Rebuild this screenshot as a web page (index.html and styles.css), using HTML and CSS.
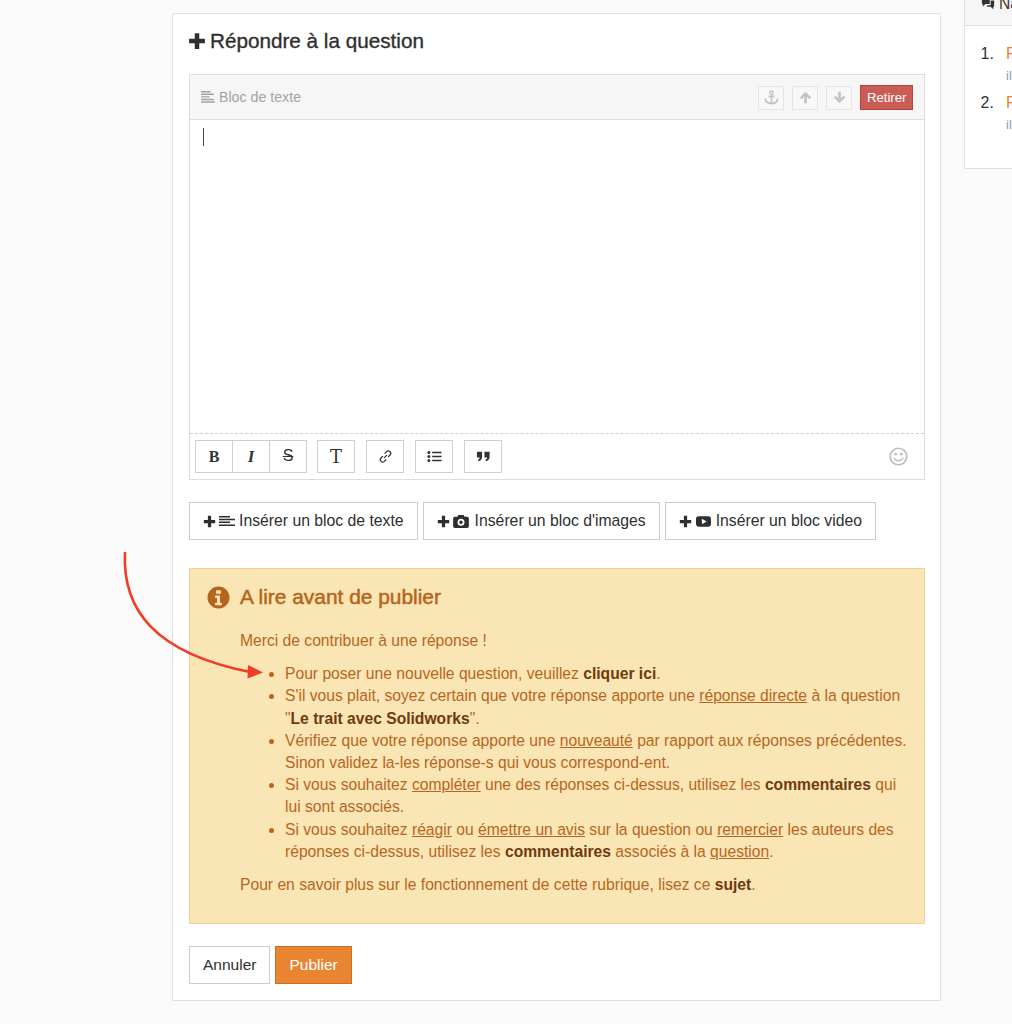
FILE: index.html
```html
<!DOCTYPE html>
<html lang="fr">
<head>
<meta charset="utf-8">
<title>Répondre à la question</title>
<link rel="stylesheet" href="styles.css">
</head>
<body>
<svg width="0" height="0" class="defs">
  <symbol id="i-plus" viewBox="0 0 16 16"><path d="M6 1h4v5h5v4h-5v5H6v-5H1V6h5z"/></symbol>
  <symbol id="i-lines" viewBox="0 0 16 14"><path d="M0 0h11v1.700H0zM0 3h15v1.700H0zM0 6h10v1.700H0zM0 9h15v1.700H0zM0 12h16v1.700H0z"/></symbol>
  <symbol id="i-lines4" viewBox="0 0 16 10"><path d="M0 0h11v1.500H0zM0 2.800h16v1.500H0zM0 5.600h11v1.500H0zM0 8.500h16V10H0z"/></symbol>
  <symbol id="i-camera" viewBox="0 0 18 16"><path fill-rule="evenodd" d="M6 1h6l1.200 2H16a2 2 0 0 1 2 2v9a2 2 0 0 1-2 2H2a2 2 0 0 1-2-2V5a2 2 0 0 1 2-2h2.800zM9 5.500a4 4 0 1 0 0 8 4 4 0 0 0 0-8zM9 7.500a2 2 0 1 1 0 4 2 2 0 0 1 0-4z"/></symbol>
  <symbol id="i-video" viewBox="0 0 16 11"><path fill-rule="evenodd" d="M3 0h10a3 3 0 0 1 3 3v5a3 3 0 0 1-3 3H3a3 3 0 0 1-3-3V3a3 3 0 0 1 3-3zM6.300 2.500v6l5-3z"/></symbol>
</svg>

<div class="page">
  <main class="card">
    <h2 class="card-title"><svg class="ico-title"><use href="#i-plus"/></svg>Répondre à la question</h2>

    <section class="editor">
      <header class="editor-head">
        <span class="block-label"><svg class="ico-label"><use href="#i-lines"/></svg>Bloc de texte</span>
        <div class="head-actions">
          <span class="mini-btn"><svg viewBox="0 0 16 16" class="ico-anchor"><path d="M8 4.500V14.500M4.800 6.800h6.400M1.300 9c.3 3.500 3 5.500 6.700 5.500s6.400-2 6.700-5.500" fill="none" stroke="currentColor" stroke-width="1.800"/><circle cx="8" cy="2.800" r="1.800" fill="none" stroke="currentColor" stroke-width="1.500"/></svg></span>
          <span class="mini-btn"><svg viewBox="0 0 16 16" class="ico-mini"><path d="M8 1l7 7-2.200 2.200-3.100-3.100V15H6.300V7.100L3.200 10.200 1 8z" fill="currentColor"/></svg></span>
          <span class="mini-btn"><svg viewBox="0 0 16 16" class="ico-mini"><path d="M8 15L1 8l2.200-2.200 3.100 3.100V1h3.400v7.900l3.100-3.100L15 8z" fill="currentColor"/></svg></span>
          <span class="remove-btn">Retirer</span>
        </div>
      </header>
      <div class="editor-body"><span class="caret"></span></div>
      <footer class="editor-tools">
        <div class="tool-group">
          <span class="tool"><b class="t-bold">B</b></span>
          <span class="tool"><i class="t-italic">I</i></span>
          <span class="tool"><s class="t-strike">S</s></span>
        </div>
        <span class="tool tool-solo"><span class="t-serif">T</span></span>
        <span class="tool tool-solo"><svg viewBox="0 0 16 16" class="ico-tool"><path d="M6.800 9.200l2.400-2.400M7.500 4.500l1.700-1.700a2.500 2.500 0 0 1 3.600 3.600l-1.700 1.700M8.500 11.500l-1.700 1.700a2.500 2.500 0 0 1-3.600-3.600l1.700-1.700" fill="none" stroke="currentColor" stroke-width="1.300" stroke-linecap="round"/></svg></span>
        <span class="tool tool-solo"><svg viewBox="0 0 16 16" class="ico-tool"><path d="M5.500 3h10v1.600h-10zM5.500 7.200h10v1.600h-10zM5.500 11.400h10V13h-10z" fill="currentColor"/><circle cx="2" cy="3.800" r="1.600"/><circle cx="2" cy="8" r="1.600"/><circle cx="2" cy="12.200" r="1.600"/></svg></span>
        <span class="tool tool-solo"><svg viewBox="0 0 16 16" class="ico-tool"><path d="M1 3h5.500v5.500c0 2.500-1.500 4-3.800 4.500L2 11.500c1.200-.3 1.800-1 1.900-2.500H1zM9 3h5.500v5.500c0 2.500-1.500 4-3.800 4.500L10 11.500c1.200-.3 1.800-1 1.900-2.500H9z" fill="currentColor"/></svg></span>
        <svg viewBox="0 0 20 20" class="ico-smile"><circle cx="10" cy="10" r="8.700" fill="none" stroke="currentColor" stroke-width="1.800"/><circle cx="7" cy="7.500" r="1.500" fill="currentColor"/><circle cx="13" cy="7.500" r="1.500" fill="currentColor"/><path d="M5.500 12c1 1.700 2.600 2.500 4.500 2.500s3.500-.8 4.500-2.500" fill="none" stroke="currentColor" stroke-width="1.600" stroke-linecap="round"/></svg>
      </footer>
    </section>

    <div class="insert-row">
      <span class="btn btn-insert"><svg class="ico-plus"><use href="#i-plus"/></svg><svg class="ico-lines"><use href="#i-lines4"/></svg>Insérer un bloc de texte</span>
      <span class="btn btn-insert"><svg class="ico-plus"><use href="#i-plus"/></svg><svg class="ico-cam"><use href="#i-camera"/></svg>Insérer un bloc d'images</span>
      <span class="btn btn-insert"><svg class="ico-plus"><use href="#i-plus"/></svg><svg class="ico-vid"><use href="#i-video"/></svg>Insérer un bloc video</span>
    </div>

    <section class="notice">
      <h3 class="notice-title"><svg viewBox="0 0 24 24" class="ico-info"><path fill-rule="evenodd" d="M12 .5a11.500 11.500 0 1 1 0 23 11.500 11.500 0 0 1 0-23zM9.500 4.500v3.500h5V4.500zM8.500 10v2.500h2v5h-2V20h7v-2.500h-2V10z"/></svg>A lire avant de publier</h3>
      <div class="notice-body">
        <p class="intro">Merci de contribuer à une réponse !</p>
        <ul class="rules">
          <li>Pour poser une nouvelle question, veuillez <a class="strong-link">cliquer ici</a>.</li>
          <li>S'il vous plait, soyez certain que votre réponse apporte une <u>réponse directe</u> à la question "<a class="strong-link">Le trait avec Solidworks</a>".</li>
          <li>Vérifiez que votre réponse apporte une <u>nouveauté</u> par rapport aux réponses précédentes. Sinon validez la-les réponse-s qui vous correspond-ent.</li>
          <li>Si vous souhaitez <u>compléter</u> une des réponses ci-dessus, utilisez les <a class="strong-link">commentaires</a> qui lui sont associés.</li>
          <li>Si vous souhaitez <u>réagir</u> ou <u>émettre un avis</u> sur la question ou <u>remercier</u> les auteurs des réponses ci-dessus, utilisez les <a class="strong-link">commentaires</a> associés à la <u>question</u>.</li>
        </ul>
        <p class="outro">Pour en savoir plus sur le fonctionnement de cette rubrique, lisez ce <a class="strong-link">sujet</a>.</p>
      </div>
    </section>

    <div class="form-actions">
      <span class="btn">Annuler</span>
      <span class="btn btn-primary">Publier</span>
    </div>
  </main>

  <aside class="side">
    <div class="side-head"><svg viewBox="0 0 16 16" class="ico-side"><path d="M1 1h9v7H5l-3 3V8H1zM11 4h4v7h-1v3l-3-3H7V9.500h4z"/></svg>Navigation</div>
    <ol class="side-list">
      <li><a>Réponse</a><small>il y a</small></li>
      <li><a>Réponse</a><small>il y a</small></li>
    </ol>
  </aside>
</div>

<svg class="arrow" viewBox="0 0 160 140" width="160" height="140">
  <path d="M5 2C2 60 35 103 130 122" fill="none" stroke="#ee3e27" stroke-width="2.600"/>
  <path d="M143 122.500L128 115l-.5 13.500z" fill="#ee3e27"/>
</svg>
</body>
</html>
```
FILE: styles.css
```css
* { box-sizing: border-box; }
html, body { margin: 0; height: 100%; }
body {
  background: #fafafa;
  color: #333;
  font: 15.65px/22.2px "Liberation Sans", Arial, sans-serif;
  overflow: hidden;
  position: relative;
}
.defs { position: absolute; }
svg { fill: currentColor; flex: none; }

.page { display: flex; align-items: flex-start; padding: 13px 0 0 172px; gap: 23px; width: 100%; overflow: hidden; }

.card {
  width: 769px;
  height: 988px;
  flex: none;
  background: #fff;
  border: 1px solid #e0e0e0;
  padding: 0 15px 0 16px;
}
.card-title {
  display: flex;
  align-items: center;
  margin: 0 0 6px;
  height: 54px;
  font-size: 20.7px;
  font-weight: 400;
  color: #2f2f2f;
  -webkit-text-stroke: .35px #2f2f2f;
}
.ico-title { width: 18px; height: 18px; margin-right: 4px; margin-left: -1px; }

.editor { border: 1px solid #dedede; height: 406px; display: flex; flex-direction: column; }
.editor-head {
  height: 45px;
  flex: none;
  background: #f6f6f6;
  border-bottom: 1px solid #dedede;
  display: flex;
  align-items: center;
  justify-content: space-between;
  padding: 1px 11px 0 11px;
}
.block-label { display: flex; align-items: center; color: #a3a3a3; font-size: 14.2px; }
.ico-label { width: 14px; height: 12px; margin-right: 4px; color: #a3a3a3; }
.head-actions { display: flex; align-items: center; gap: 8px; }
.mini-btn {
  width: 26px; height: 24px;
  border: 1px solid #e6e6e6;
  background: #f8f8f8;
  color: #c4c4c4;
  display: flex; align-items: center; justify-content: center;
}
.ico-mini { width: 13px; height: 13px; }
.ico-anchor { width: 15px; height: 15px; }
.remove-btn {
  height: 25px;
  padding: 0 5.5px;
  background: #c95d56;
  border: 1px solid #b8433d;
  color: #fff;
  font-size: 13.2px;
  line-height: 23px;
}
.editor-body { flex: 1; padding: 8px 13px; }
.caret { display: block; width: 1px; height: 18px; background: #444; }
.editor-tools {
  height: 46px;
  flex: none;
  border-top: 1px dashed #cfcfcf;
  display: flex;
  align-items: center;
  padding: 0 16px 0 5px;
  gap: 11px;
}
.tool-group { display: flex; margin-right: -1px; }
.tool {
  width: 38px; height: 33px;
  border: 1px solid #d0d0d0;
  margin-left: -1px;
  display: flex; align-items: center; justify-content: center;
  color: #333;
  background: #fff;
}
.tool-group .tool:first-child { margin-left: 0; }
.tool-solo { margin-left: 0; width: 38px; }
.t-bold { font: 700 16px "Liberation Serif", serif; }
.t-italic { font: italic 700 17px "Liberation Serif", serif; }
.t-strike { font-size: 16px; }
.t-serif { font: 400 18px "DejaVu Serif", serif; }
.ico-tool { width: 15px; height: 15px; }
.ico-smile { width: 19px; height: 19px; margin-left: auto; color: #bdbdbd; }

.insert-row { display: flex; gap: 5px; margin-top: 22px; }
.btn {
  display: inline-flex;
  align-items: center;
  height: 38px;
  padding: 0 13px;
  border: 1px solid #ccc;
  background: #fff;
  color: #2f2f2f;
}
.btn-insert { font-size: 15.75px; }
.ico-plus { width: 13px; height: 13px; margin-right: 3px; }
.ico-lines { width: 16px; height: 10px; margin-right: 4px; }
.ico-cam { width: 16px; height: 14px; margin-right: 6px; }
.ico-vid { width: 15px; height: 11px; margin-left: 1px; margin-right: 5px; }

.notice {
  margin-top: 28px;
  height: 356px;
  background: #fae5b4;
  border: 1px solid #f4cf97;
  color: #b8651f;
  padding: 14px 17px 0 16px;
}
.notice-title {
  display: flex;
  align-items: center;
  margin: 0;
  height: 28px;
  font-size: 20.9px;
  font-weight: 400;
  -webkit-text-stroke: .5px #b5651d;
  color: #b5651d;
}
.ico-info { width: 23px; height: 23px; margin-left: 1px; margin-right: 10px; }
.notice-body { padding-left: 34px; }
.intro { margin: 19px 0 0; }
.rules { margin: 11px 0 0; padding: 0 0 0 45px; }
.rules li::marker { color: #b8651f; }
.outro { margin: 11px 0 0; }
.strong-link { font-weight: 700; color: #6f3a0f; }

.form-actions { display: flex; gap: 5px; margin-top: 22px; }
.form-actions .btn { font-size: 15.5px; }
.form-actions .btn-primary { background: #e98530; border-color: #c96f24; color: #fff; }

.side {
  width: 100px;
  height: 181px;
  margin-top: -25px;
  background: #fff;
  border: 1px solid #e0e0e0;
  flex: none;
}
.side-head {
  height: 37px;
  background: #f6f6f6;
  border-bottom: 1px solid #e0e0e0;
  display: flex; align-items: flex-end;
  padding: 0 0 10px 16px;
  white-space: nowrap;
}
.ico-side { width: 14px; height: 14px; margin-right: 4px; margin-bottom: 4px; }
.side-list { margin: 0; padding: 17px 0 0 41px; font-size: 16px; }
.side-list li { height: 48.5px; }
.side-list li::marker { content: counter(list-item) ".\00a0\00a0\2009"; color: #333; }
.side-list a { display: block; color: #e98530; line-height: 22px; }
.side-list small { display: block; color: #999; font-size: 13px; line-height: 22px; }

.arrow { position: absolute; left: 120px; top: 550px; pointer-events: none; }
```
